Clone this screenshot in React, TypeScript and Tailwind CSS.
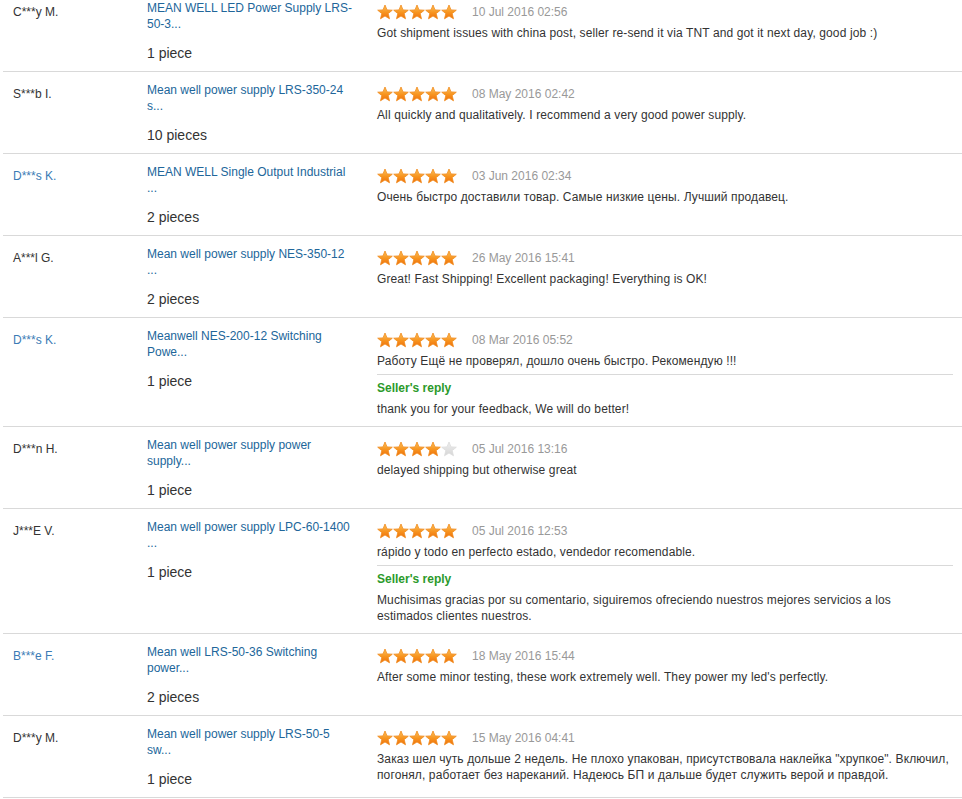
import { useId } from "react";

type Review = {
  name: string;
  nameLink?: boolean;
  product: React.ReactNode;
  qty: string;
  stars: number;
  date: string;
  text: string;
  reply?: string;
};

const REVIEWS: Review[] = [
  {
    name: "C***y M.",
    product: (
      <>
        MEAN WELL LED Power Supply LRS-<wbr />
        50-3...
      </>
    ),
    qty: "1 piece",
    stars: 5,
    date: "10 Jul 2016 02:56",
    text: "Got shipment issues with china post, seller re-send it via TNT and got it next day, good job :)",
  },
  {
    name: "S***b I.",
    product: "Mean well power supply LRS-350-24 s...",
    qty: "10 pieces",
    stars: 5,
    date: "08 May 2016 02:42",
    text: "All quickly and qualitatively. I recommend a very good power supply.",
  },
  {
    name: "D***s K.",
    nameLink: true,
    product: "MEAN WELL Single Output Industrial ...",
    qty: "2 pieces",
    stars: 5,
    date: "03 Jun 2016 02:34",
    text: "Очень быстро доставили товар. Самые низкие цены. Лучший продавец.",
  },
  {
    name: "A***l G.",
    product: "Mean well power supply NES-350-12 ...",
    qty: "2 pieces",
    stars: 5,
    date: "26 May 2016 15:41",
    text: "Great! Fast Shipping! Excellent packaging! Everything is OK!",
  },
  {
    name: "D***s K.",
    nameLink: true,
    product: "Meanwell NES-200-12 Switching Powe...",
    qty: "1 piece",
    stars: 5,
    date: "08 Mar 2016 05:52",
    text: "Работу Ещё не проверял, дошло очень быстро. Рекомендую !!!",
    reply: "thank you for your feedback, We will do better!",
  },
  {
    name: "D***n H.",
    product: "Mean well power supply power supply...",
    qty: "1 piece",
    stars: 4,
    date: "05 Jul 2016 13:16",
    text: "delayed shipping but otherwise great",
  },
  {
    name: "J***E V.",
    product: "Mean well power supply LPC-60-1400 ...",
    qty: "1 piece",
    stars: 5,
    date: "05 Jul 2016 12:53",
    text: "rápido y todo en perfecto estado, vendedor recomendable.",
    reply:
      "Muchisimas gracias por su comentario, siguiremos ofreciendo nuestros mejores servicios a los estimados clientes nuestros.",
  },
  {
    name: "B***e F.",
    nameLink: true,
    product: "Mean well LRS-50-36 Switching power...",
    qty: "2 pieces",
    stars: 5,
    date: "18 May 2016 15:44",
    text: "After some minor testing, these work extremely well. They power my led's perfectly.",
  },
  {
    name: "D***y M.",
    product: "Mean well power supply LRS-50-5 sw...",
    qty: "1 piece",
    stars: 5,
    date: "15 May 2016 04:41",
    text: "Заказ шел чуть дольше 2 недель. Не плохо упакован, присутствовала наклейка \"хрупкое\". Включил, погонял, работает без нареканий. Надеюсь БП и дальше будет служить верой и правдой.",
  },
];

const STAR_POINTS =
  "8,1 10,5.9 15.3,6.2 11.2,9.6 12.5,14.8 8,12 3.5,14.8 4.8,9.6 0.7,6.2 6,5.9";

function Star({ on }: { on: boolean }) {
  const id = useId();
  return (
    <svg width="16" height="16" viewBox="0 0 16 16" className="block">
      <defs>
        <linearGradient id={id} x1="0" y1="0" x2="0" y2="1">
          {on ? (
            <>
              <stop offset="0" stopColor="#fcc25a" />
              <stop offset="0.55" stopColor="#f7931e" />
              <stop offset="1" stopColor="#ee6f0c" />
            </>
          ) : (
            <>
              <stop offset="0" stopColor="#eeeeee" />
              <stop offset="1" stopColor="#d6d6d6" />
            </>
          )}
        </linearGradient>
      </defs>
      <polygon
        points={STAR_POINTS}
        fill={`url(#${id})`}
        stroke={on ? "#f08a1c" : "#dcdcdc"}
        strokeWidth="0.8"
        strokeLinejoin="round"
      />
    </svg>
  );
}

function Stars({ value }: { value: number }) {
  return (
    <div className="flex">
      {[0, 1, 2, 3, 4].map((i) => (
        <Star key={i} on={i < value} />
      ))}
    </div>
  );
}

function ReviewRow({ r }: { r: Review }) {
  return (
    <div className="flex items-start border-b border-[#d9d9d9]">
      {/* buyer */}
      <div className="w-[144px] shrink-0 pl-[10px] pt-[14px] text-[12px] leading-4">
        <span className={r.nameLink ? "text-[#3b7bb5]" : "text-[#333]"}>{r.name}</span>
      </div>

      {/* product */}
      <div className="w-[230px] shrink-0 pt-[10px] pb-[9px]">
        <div className="w-[209px] text-[12px] leading-4 text-[#21669a]">{r.product}</div>
        <div className="mt-[12px] text-[14px] leading-[18px] text-[#333]">{r.qty}</div>
      </div>

      {/* feedback */}
      <div className="flex-1 pt-[14px] pr-[9px] pb-[9px]">
        <div className="flex h-4 items-center gap-[15px]">
          <Stars value={r.stars} />
          <span className="text-[12px] text-[#999]">{r.date}</span>
        </div>
        <p className="mt-[5px] text-[12px] leading-4 tracking-[0.12px] text-[#333]">{r.text}</p>
        {r.reply && (
          <div className="mt-[5px] border-t border-[#d9d9d9] pt-[5px]">
            <div className="text-[12px] font-bold leading-4 text-[#2b9a2b]">Seller's reply</div>
            <p className="mt-[5px] pr-[40px] text-[12px] leading-4 tracking-[0.12px] text-[#333]">
              {r.reply}
            </p>
          </div>
        )}
      </div>
    </div>
  );
}

export default function App() {
  return (
    <div className="h-[799px] w-[962px] overflow-hidden bg-white font-['Liberation_Sans',Arial,sans-serif]">
      <div className="-mt-[10px] pl-[3px]">
        {REVIEWS.map((r, i) => (
          <ReviewRow key={i} r={r} />
        ))}
      </div>
    </div>
  );
}
